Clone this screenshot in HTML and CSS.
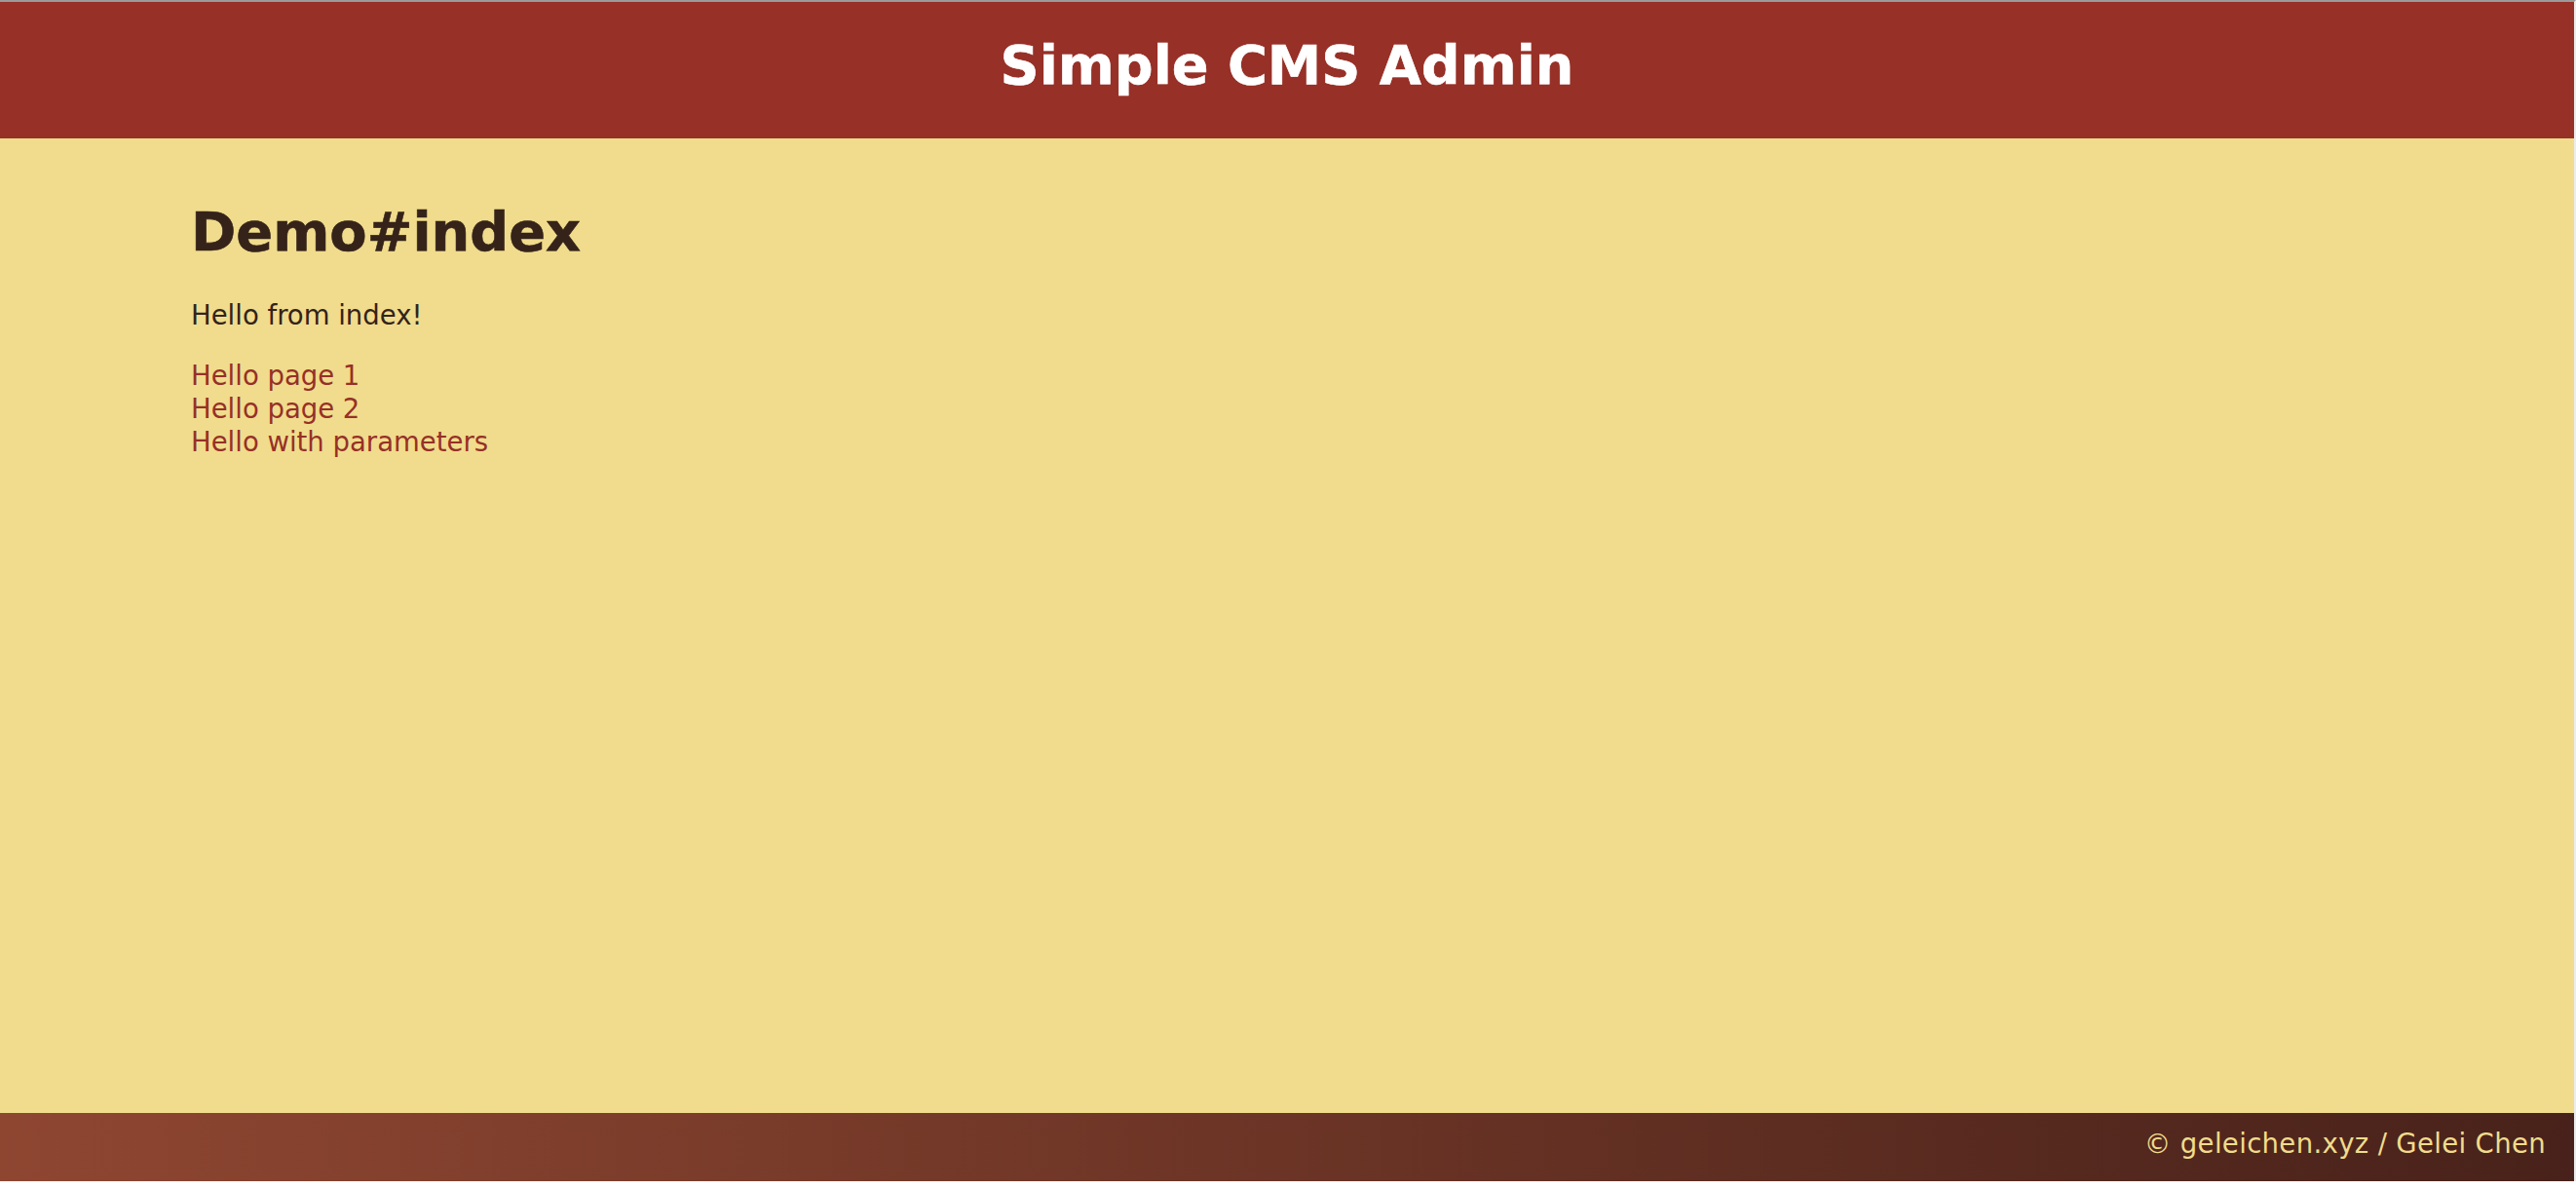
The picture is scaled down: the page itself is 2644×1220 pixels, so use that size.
FILE: index.html
```html
<!DOCTYPE html>
<html lang="en">
<head>
<meta charset="utf-8">
<title>Simple CMS Admin</title>
<link rel="stylesheet" href="styles.css">
</head>
<body>
  <header class="site-header">
    <h1 class="site-title">Simple CMS Admin</h1>
  </header>
  <main class="content">
    <h1 class="page-title">Demo#index</h1>
    <p class="intro">Hello from index!</p>
    <nav class="links">
      <a href="#">Hello page 1</a>
      <a href="#">Hello page 2</a>
      <a href="#">Hello with parameters</a>
    </nav>
  </main>
  <footer class="site-footer">© geleichen.xyz / Gelei Chen</footer>
</body>
</html>
```

FILE: styles.css
```css
html {
  background: #ffffff;
}

body {
  margin: 0 0 8px 0;
  min-height: calc(100vh - 8px);
  box-sizing: border-box;
  display: flex;
  flex-direction: column;
  border-top: 2px solid #9b9b9b;
  border-right: 2px solid #ececec;
  background: #f0dc8c;
  color: #33231a;
  font-family: "DejaVu Sans", Verdana, sans-serif;
  font-size: 27.5px;
  line-height: 34px;
}

.site-header {
  height: 140px;
  box-sizing: border-box;
  padding-top: 33px;
  background: #973027;
}

.site-title {
  margin: 0;
  color: #ffffff;
  font-size: 55.7px;
  line-height: 64px;
  font-weight: bold;
  text-align: center;
  -webkit-text-stroke: 0.6px #ffffff;
}

.content {
  flex: 1;
  padding: 0 196px;
}

.page-title {
  margin: 64px 0 36px;
  color: #35231a;
  font-size: 55.8px;
  line-height: 64px;
  font-weight: bold;
  -webkit-text-stroke: 0.6px #35231a;
}

.intro {
  margin: 0 0 28px;
}

.links {
  display: flex;
  flex-direction: column;
  align-items: flex-start;
}

.links a {
  color: #973027;
  text-decoration: none;
}

.site-footer {
  height: 70px;
  box-sizing: border-box;
  padding: 14px 29px 22px;
  text-align: right;
  letter-spacing: 0.35px;
  color: #f0dc8c;
  background: linear-gradient(to right, #8e4631, #48221a);
}
```
